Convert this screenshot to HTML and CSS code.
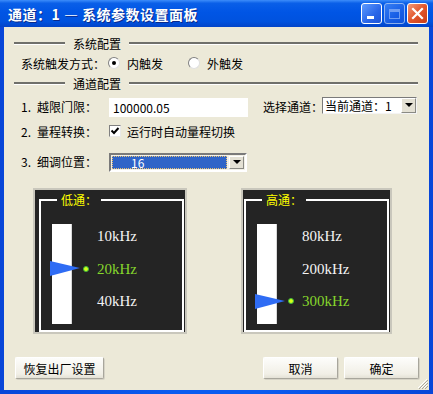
FILE: index.html
```html
<!DOCTYPE html>
<html lang="zh-CN">
<head>
    <meta charset="UTF-8">
    <meta name="viewport" content="width=device-width, initial-scale=1.0">
    <title>系统参数设置面板</title>
    <link rel="stylesheet" href="styles.css">
</head>
<body>
    <div class="window">
        <div class="titlebar">
            <span class="title">通道：1 — 系统参数设置面板</span>
            <div class="title-buttons">
                <span class="tb-btn tb-min"><span class="min-bar"></span></span>
                <span class="tb-btn tb-max"><span class="max-box"></span></span>
                <span class="tb-btn tb-close">
                    <svg width="13" height="13" viewBox="0 0 13 13"><path d="M2 2 L11 11 M11 2 L2 11" stroke="#fff" stroke-width="2.2" stroke-linecap="square"/></svg>
                </span>
            </div>
        </div>

        <div class="client">
            <div class="group-line"><span>系统配置</span></div>
            <div class="row row-trigger">
                <span class="label">系统触发方式：</span>
                <span class="radio checked"><span class="radio-circle"></span>内触发</span>
                <span class="radio"><span class="radio-circle"></span>外触发</span>
            </div>

            <div class="group-line"><span>通道配置</span></div>
            <div class="row row-limit">
                <span class="label"><span class="num">1.</span>越限门限：</span>
                <div class="textbox">100000.05</div>
                <span class="label-channel">选择通道：</span>
                <div class="combo combo-channel">
                    <span class="combo-text">当前通道：1</span>
                    <span class="combo-btn"><span class="arrow"></span></span>
                </div>
            </div>
            <div class="row row-range">
                <span class="label"><span class="num">2.</span>量程转换：</span>
                <span class="checkbox">
                    <svg width="10" height="10" viewBox="0 0 10 10"><path d="M1.5 4.5 L4 7 L8.5 2" fill="none" stroke="#000" stroke-width="2"/></svg>
                </span>
                <span class="check-text">运行时自动量程切换</span>
            </div>
            <div class="row row-fine">
                <span class="label"><span class="num">3.</span>细调位置：</span>
                <div class="combo combo-fine">
                    <span class="combo-selected">16</span>
                    <span class="combo-btn"><span class="arrow"></span></span>
                </div>
            </div>

            <div class="panels">
                <div class="panel panel-low">
                    <fieldset class="frame">
                        <legend>低通：</legend>
                        <div class="slider">
                            <span class="track"></span>
                            <svg class="pointer pos-2" width="30" height="15" viewBox="0 0 30 15"><polygon points="0,0 30,7 0,15" fill="#2f6cf4"/></svg>
                            <span class="dot pos-2"></span>
                            <span class="freq pos-1">10kHz</span>
                            <span class="freq pos-2 active">20kHz</span>
                            <span class="freq pos-3">40kHz</span>
                        </div>
                    </fieldset>
                </div>
                <div class="panel panel-high">
                    <fieldset class="frame">
                        <legend>高通：</legend>
                        <div class="slider">
                            <span class="track"></span>
                            <svg class="pointer pos-3" width="30" height="15" viewBox="0 0 30 15"><polygon points="0,0 30,7 0,15" fill="#2f6cf4"/></svg>
                            <span class="dot pos-3"></span>
                            <span class="freq pos-1">80kHz</span>
                            <span class="freq pos-2">200kHz</span>
                            <span class="freq pos-3 active">300kHz</span>
                        </div>
                    </fieldset>
                </div>
            </div>

            <div class="buttons">
                <button class="btn btn-reset">恢复出厂设置</button>
                <div class="btn-group">
                    <button class="btn">取消</button>
                    <button class="btn">确定</button>
                </div>
            </div>
        </div>

        <svg class="grip" width="11" height="11" viewBox="0 0 11 11">
            <path d="M10 1 L1 10 M10 4 L4 10 M10 7 L7 10" stroke="#fff" stroke-width="1"/>
            <path d="M11 2 L2 11 M11 5 L5 11 M11 8 L8 11" stroke="#a9a699" stroke-width="1"/>
        </svg>
    </div>
</body>
</html>
```

FILE: styles.css
```css
* {
    box-sizing: border-box;
}
body {
    margin: 0;
    font-family: "Noto Sans CJK SC", sans-serif;
    font-size: 12px;
    background-color: #fff;
}
.window {
    width: 433px;
    height: 394px;
    display: flex;
    flex-direction: column;
    background: linear-gradient(90deg, #0846d8, #0a5cf0 40%, #0a5cf0 60%, #0846d8);
    padding-bottom: 4px;
    position: relative;
}
.titlebar {
    height: 27px;
    display: flex;
    align-items: center;
    justify-content: space-between;
    padding: 0 5px 0 8px;
    background: linear-gradient(#3d8dfa 0%, #0a5fe8 12%, #0055e5 45%, #0052de 80%, #0344c8 100%);
}
.title {
    color: #fff;
    font-weight: bold;
    font-size: 14px;
    letter-spacing: 0.5px;
    text-shadow: 1px 1px 0 #0b2a8a;
}
.title-buttons {
    display: flex;
    gap: 2px;
}
.tb-btn {
    width: 21px;
    height: 21px;
    border: 1px solid #fff;
    border-radius: 3px;
    display: flex;
    align-items: center;
    justify-content: center;
    background: linear-gradient(135deg, #5d9bff, #2a66e8 60%, #1d55d8);
}
.tb-min {
    align-items: flex-end;
    justify-content: flex-start;
    padding: 0 0 4px 5px;
}
.min-bar {
    width: 7px;
    height: 3px;
    background: #fff;
}
.tb-max {
    opacity: 0.55;
}
.max-box {
    width: 11px;
    height: 10px;
    border: 1px solid #c8d8ff;
    border-top-width: 3px;
}
.tb-close {
    background: linear-gradient(135deg, #f29a7a, #e2562c 50%, #c73d18);
}

.client {
    flex: 1;
    margin: 0 4px;
    background-color: #ece9d8;
    padding: 6px 11px 0 10px;
}
.group-line {
    display: flex;
    align-items: center;
    height: 20px;
    color: #000;
}
.group-line::before,
.group-line::after {
    content: "";
    height: 2px;
    background-color: #6f6f6a;
    border-bottom: 1px solid #fff;
    box-sizing: content-box;
}
.group-line::before {
    width: 51px;
    margin-right: 8px;
}
.group-line::after {
    flex: 1;
    margin-left: 8px;
}

.row {
    display: flex;
    align-items: center;
    height: 20px;
    padding-left: 7px;
}
.label {
    width: 87px;
    white-space: nowrap;
}
.num {
    display: inline-block;
    width: 16px;
}
.radio {
    display: flex;
    align-items: center;
    gap: 7px;
    margin-right: 25px;
}
.radio-circle {
    width: 12px;
    height: 12px;
    border-radius: 50%;
    background: #fff;
    border: 1px solid;
    border-color: #808080 #e0e0e0 #e0e0e0 #808080;
    display: flex;
    align-items: center;
    justify-content: center;
}
.radio.checked .radio-circle::after {
    content: "";
    width: 4px;
    height: 4px;
    border-radius: 50%;
    background: #000;
}

.row-limit {
    margin-top: 3px;
}
.textbox {
    width: 139px;
    height: 19px;
    margin-left: 1px;
    margin-top: 2px;
    background: #fff;
    padding: 2px 4px;
    line-height: 15px;
}
.label-channel {
    margin-left: 15px;
}
.combo {
    display: flex;
    background: #fff;
    border: 1px solid;
    border-color: #7a7a7a #f4f4f4 #f4f4f4 #7a7a7a;
}
.combo-channel {
    width: 95px;
    height: 17px;
    margin-left: -1px;
    margin-top: -2px;
}
.combo-text {
    flex: 1;
    line-height: 15px;
    padding-left: 2px;
}
.combo-btn {
    width: 15px;
    background: #e4e1d4;
    border: 1px solid;
    border-color: #fff #8a8a84 #8a8a84 #fff;
    display: flex;
    align-items: center;
    justify-content: center;
}
.arrow {
    width: 0;
    height: 0;
    border-left: 4px solid transparent;
    border-right: 4px solid transparent;
    border-top: 4px solid #000;
}

.row-range {
    margin-top: 5px;
}
.checkbox {
    width: 12px;
    height: 12px;
    margin-left: 1px;
    background: #fff;
    border: 1px solid;
    border-color: #808080 #e8e8e8 #e8e8e8 #808080;
    display: flex;
    align-items: center;
    justify-content: center;
}
.check-text {
    margin-left: 6px;
}

.row-fine {
    margin-top: 10px;
}
.combo-fine {
    width: 138px;
    height: 19px;
    margin-left: 1px;
    margin-top: 2px;
    padding: 1px;
    border-width: 2px;
    border-color: #7a7a7a #fff #fff #7a7a7a;
    background: #f2f0e6;
}
.combo-selected {
    flex: 1;
    margin-right: 2px;
    background: #2f64c8;
    border: 1px dotted #e8c070;
    color: #fff;
    line-height: 11px;
    padding-left: 18px;
}

.panels {
    display: flex;
    margin-top: 17px;
    padding-left: 19px;
    gap: 54px;
}
.panel {
    height: 146px;
    background-color: #242424;
    border: 2px solid #c9c7bc;
    padding: 2px 1px 0 4px;
}
.panel-high {
    padding-left: 1px;
}
.frame {
    width: 145px;
    height: 140px;
    margin: 0;
    padding: 12px 0 0 9px;
    border: 2px solid #fff;
    min-width: 0;
}
.frame legend {
    margin-left: 7px;
    padding: 0 4px;
    color: #ffff00;
    font-size: 12px;
    line-height: 16px;
}
.slider {
    display: grid;
    grid-template-columns: 30px 12px auto;
    grid-template-rows: 32px 33px 32px 7px;
}
.track {
    grid-column: 1;
    grid-row: 1 / 5;
    width: 20px;
    margin: 4px 0 0 2px;
    background: #fff;
    border-right: 1px solid #d8d8d8;
}
.pointer {
    grid-column: 1;
    align-self: center;
    z-index: 1;
}
.dot {
    grid-column: 2;
    justify-self: center;
    align-self: center;
    width: 6px;
    height: 6px;
    border-radius: 50%;
    background: #d4ff1a;
    border: 1px solid #3cb83c;
}
.freq {
    grid-column: 3;
    align-self: center;
    margin-left: 5px;
    font-family: "Liberation Serif", serif;
    font-size: 15px;
    line-height: 16px;
    color: #f4f4f4;
}
.freq.active {
    color: #86d62c;
}
.pos-1 {
    grid-row: 1;
}
.pos-2 {
    grid-row: 2;
}
.pos-3 {
    grid-row: 3;
}

.buttons {
    display: flex;
    justify-content: space-between;
    margin-top: 23px;
    margin-left: 1px;
    margin-right: -1px;
}
.btn-group {
    display: flex;
    gap: 6px;
}
.btn {
    height: 22px;
    width: 75px;
    font-family: "Noto Sans CJK SC", sans-serif;
    font-size: 12px;
    color: #000;
    background: linear-gradient(#fdfdfb, #f1efe6 80%, #e4e1d6);
    border: 1px solid;
    border-color: #fff #a8a69c #a8a69c #fff;
    box-shadow: 1px 1px 0 #d6d3c6;
    border-radius: 2px;
    padding: 0;
}
.btn-reset {
    width: 89px;
}
.grip {
    position: absolute;
    right: 5px;
    bottom: 5px;
}
```
